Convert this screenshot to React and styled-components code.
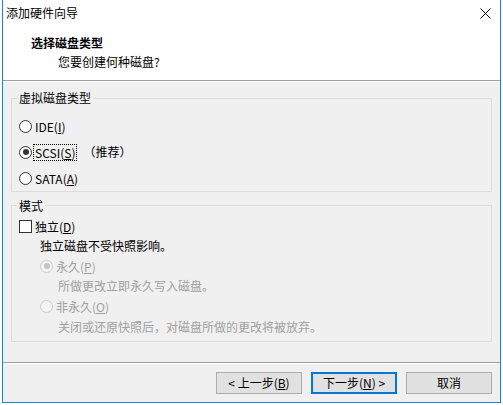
import React from 'react';
import styled, { createGlobalStyle } from 'styled-components';

const GlobalStyle = createGlobalStyle`
  * {
    box-sizing: border-box;
  }
  body {
    margin: 0;
    background: #ffffff;
    font-family: "Noto Sans CJK SC", "Microsoft YaHei", sans-serif;
    font-size: 12px;
    color: #000000;
  }
`;

const Window = styled.div`
  margin-left: 2px;
  width: 499px;
  height: 403px;
  border: 1px solid #1883d7;
  border-top: none;
  display: flex;
  flex-direction: column;
  background: #f0f0f0;
`;

const TitleBar = styled.div`
  height: 26px;
  flex: none;
  background: #ffffff;
  display: flex;
  align-items: center;
  justify-content: space-between;
  padding: 0 9px 0 3px;
  line-height: 16px;
`;

const Header = styled.div`
  height: 54px;
  flex: none;
  background: #ffffff;
  padding-top: 9px;
  line-height: 16px;
`;

const HeaderTitle = styled.div`
  margin-left: 28px;
  font-weight: bold;
`;

const HeaderSub = styled.div`
  margin: 3px 0 0 55px;
`;

const Separator = styled.div`
  height: 2px;
  flex: none;
  border-top: 1px solid #a0a0a0;
  border-bottom: 1px solid #ffffff;
`;

const Body = styled.div`
  height: 280px;
  flex: none;
  padding: 16px 8px 0;
`;

const Group = styled.div`
  height: ${(p) => p.$height}px;
  margin-bottom: ${(p) => p.$gap || 0}px;
  border: 1px solid #dcdcdc;
`;

const Legend = styled.div`
  width: fit-content;
  margin: ${(p) => p.$offset}px 0 0 5px;
  padding: 0 2px;
  background: #f0f0f0;
  line-height: 16px;
`;

const OptionList = styled.div`
  margin-top: ${(p) => p.$top}px;
  display: flex;
  flex-direction: column;
`;

const Row = styled.div`
  height: ${(p) => p.$height}px;
  display: flex;
  align-items: center;
  padding-left: ${(p) => p.$indent}px;
  line-height: 16px;
  color: ${(p) => (p.$disabled ? '#a0a0a0' : '#000000')};
`;

const RadioCircle = styled.span`
  width: 13px;
  height: 13px;
  flex: none;
  border-radius: 50%;
  border: 1px solid ${(p) => (p.$disabled ? '#cccccc' : '#333333')};
  background: ${(p) => (p.$disabled ? '#f4f4f4' : '#ffffff')};
  display: flex;
  align-items: center;
  justify-content: center;

  &::after {
    content: '';
    display: ${(p) => (p.$checked ? 'block' : 'none')};
    width: 6px;
    height: 6px;
    border-radius: 50%;
    background: ${(p) => (p.$disabled ? '#c4c4c4' : '#333333')};
  }
`;

const CheckBox = styled.span`
  width: 13px;
  height: 13px;
  flex: none;
  border: 1px solid #333333;
  background: #ffffff;
`;

const Label = styled.span`
  margin-left: 1px;
  padding: 0 1px;
  border: 1px dotted ${(p) => (p.$focused ? '#000000' : 'transparent')};
  line-height: 15px;
`;

const Note = styled.span`
  margin-left: 6px;
`;

const Footer = styled.div`
  height: 38px;
  flex: none;
  display: flex;
  justify-content: flex-end;
  align-items: flex-start;
  gap: 9px;
  padding: 8px 8px 0 0;
`;

const Button = styled.button`
  width: 86px;
  height: 22px;
  padding: 0;
  background: #e1e1e1;
  border: ${(p) => (p.$primary ? '2px solid #0078d7' : '1px solid #adadad')};
  font-family: inherit;
  font-size: 12px;
  color: #000000;
  line-height: 16px;
`;

const CloseIcon = () => (
  <svg width="11" height="11" viewBox="0 0 11 11">
    <path d="M0.5 0.5 L10.5 10.5 M10.5 0.5 L0.5 10.5" stroke="#000" strokeWidth="1" />
  </svg>
);

const Radio = ({ checked, disabled, focused, children }) => (
  <>
    <RadioCircle $checked={checked} $disabled={disabled} />
    <Label $focused={focused}>{children}</Label>
  </>
);

export default function App() {
  return (
    <>
      <GlobalStyle />
      <Window>
        <TitleBar>
          <span>添加硬件向导</span>
          <CloseIcon />
        </TitleBar>
        <Header>
          <HeaderTitle>选择磁盘类型</HeaderTitle>
          <HeaderSub>您要创建何种磁盘?</HeaderSub>
        </Header>
        <Separator />
        <Body>
          <Group $height={94} $gap={13}>
            <Legend $offset={-9}>虚拟磁盘类型</Legend>
            <OptionList $top={7}>
              <Row $height={26} $indent={7}>
                <Radio>IDE(<u>I</u>)</Radio>
              </Row>
              <Row $height={26} $indent={7}>
                <Radio checked focused>SCSI(<u>S</u>)</Radio>
                <Note>（推荐）</Note>
              </Row>
              <Row $height={26} $indent={7}>
                <Radio>SATA(<u>A</u>)</Radio>
              </Row>
            </OptionList>
          </Group>
          <Group $height={137}>
            <Legend $offset={-8}>模式</Legend>
            <OptionList $top={2}>
              <Row $height={20} $indent={7}>
                <CheckBox />
                <Label>独立(<u>D</u>)</Label>
              </Row>
              <Row $height={20} $indent={28}>独立磁盘不受快照影响。</Row>
              <Row $height={20} $indent={28} $disabled>
                <Radio checked disabled>永久(<u>P</u>)</Radio>
              </Row>
              <Row $height={20} $indent={46} $disabled>所做更改立即永久写入磁盘。</Row>
              <Row $height={20} $indent={28} $disabled>
                <Radio disabled>非永久(<u>O</u>)</Radio>
              </Row>
              <Row $height={22} $indent={46} $disabled>关闭或还原快照后，对磁盘所做的更改将被放弃。</Row>
            </OptionList>
          </Group>
        </Body>
        <Separator />
        <Footer>
          <Button>&lt; 上一步(<u>B</u>)</Button>
          <Button $primary>下一步(<u>N</u>) &gt;</Button>
          <Button>取消</Button>
        </Footer>
      </Window>
    </>
  );
}
